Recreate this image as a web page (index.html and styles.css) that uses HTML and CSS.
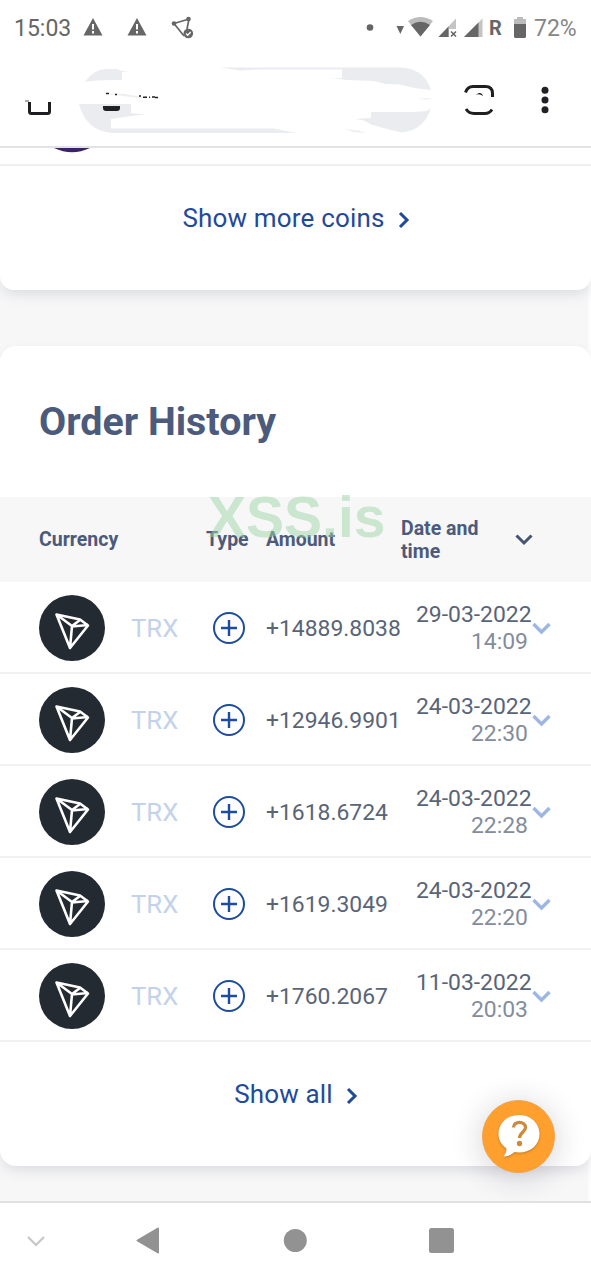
FILE: index.html
```html
<!DOCTYPE html>
<html lang="en">
<head>
<meta charset="utf-8">
<title>Order History</title>
<link rel="stylesheet" href="styles.css">
</head>
<body>
<div class="phone">
  <header class="status">
    <span class="clock">15:03</span>
    <svg class="warn" width="20" height="18" viewBox="0 0 20 18"><path d="M10 0 19.5 17.5H.5Z" fill="#666"/><path d="M10 6v5.500M10 13v2.400" stroke="#fff" stroke-width="2"/></svg>
    <svg class="warn second" width="20" height="18" viewBox="0 0 20 18"><path d="M10 0 19.5 17.5H.5Z" fill="#666"/><path d="M10 6v5.500M10 13v2.400" stroke="#fff" stroke-width="2"/></svg>
    <svg class="mesh" width="24" height="24" viewBox="0 0 24 24"><path d="M3 7.500 18 3M3 7.500 13 20M18 3 16 13" fill="none" stroke="#666" stroke-width="1.700"/><circle cx="3" cy="7.500" r="2.300" fill="#666"/><circle cx="17.500" cy="3" r="2.300" fill="#666"/><circle cx="17.300" cy="17.500" r="4.800" fill="#666"/><path d="m15 17.500 1.700 1.700 3-3.200" fill="none" stroke="#fff" stroke-width="1.300"/></svg>
    <svg class="signals" width="226" height="26" viewBox="365 15 226 26">
      <circle cx="370" cy="27.500" r="3.300" fill="#666"/>
      <path d="M396.500 26h7.500l-3.700 8Z" fill="#666"/>
      <path d="M408 21Q420.500 13 433 21L420.500 36.500Z" fill="#bcbcbc"/><path d="M411 25Q420.500 18.500 430 25L420.500 36.500Z" fill="#666"/>
      <path d="M438.500 37 456 18.500V29h-7v8Z" fill="#c4c4c4"/><path d="M438.500 37 448.500 26.500V37Z" fill="#666"/><path d="m451 31.500 5 5m0-5-5 5" stroke="#666" stroke-width="1.600"/>
      <path d="M464 37 482.500 18.500V37Z" fill="#c4c4c4"/><path d="M464 37 478.500 22.500V37Z" fill="#666"/>
      <path d="M517 17h6v2h3v6h-12v-6h3Z" fill="#bcbcbc"/><path d="M514 24h12v12.500q0 1.500-1.500 1.500h-9q-1.500 0-1.500-1.500Z" fill="#666"/>
    </svg>
    <b class="roaming">R</b>
    <span class="charge">72%</span>
  </header>

  <nav class="browser">
    <svg class="home" width="28" height="36" viewBox="25 80 28 36"><path d="M29.500 102v9.500q0 2 2 2h16q2 0 2-2V102" fill="none" stroke="#1f1f22" stroke-width="3"/><path d="M25 101h4" stroke="#555" stroke-width="1"/></svg>
    <svg class="address" width="357" height="82" viewBox="78 66 357 82">
      <path d="M85 81.500Q94 69 107 69h10l5 2 8 .5-8 .5v8Q100 79.500 85 81.500Z" fill="#ebecf0"/>
      <path d="M79 104h52v9l15 1.500-15 1.500-20 3v9.500h163l22 4.500H112Q86 131 79 104Z" fill="#ebecf0"/>
      <path d="M220 67.500h180Q424 68 431 90L414 88 400 84.500 385 84 374 81 347 80 331 78h11v-8.500H260L240 70.500Z" fill="#ebecf0"/>
      <path d="M355 119 371 118v-6h42l14-1 4-3q-7 22-29 24.500l-13-3-18-5-7-4ZM417 99l10-.8 6 .8-6 .6ZM344 129l16 2 6 2-12-1Z" fill="#ebecf0"/>
      <path d="M100 93 125 94l17 3v1.500Z" fill="#efeff3"/>
      <path d="M103 106h17v2q0 3-3 3h-11q-3 0-3-3Z" fill="#202126"/>
      <path d="M106 93.500h3m6 1h2M139 96h2m2 1.200h4m2 0h1m2-.2h3m0 .5h3" stroke="#222" stroke-width="1.500"/>
    </svg>
    <svg class="tabs" width="32" height="34" viewBox="464 83 32 34"><path d="M465.500 92.500q2-6 7.500-6h12.500q7 0 7 7V97M466 109q3 4.500 8 4.500h11q4.500 0 7-4" fill="none" stroke="#1f1f22" stroke-width="3"/><path d="M475.500 94.700 479 93q3-.5 4 3-3-2.500-7.500-1.300Z" fill="#222"/></svg>
    <svg class="dots" width="8" height="28" viewBox="0 0 8 28"><g fill="#202124"><circle cx="4" cy="4.300" r="3.500"/><circle cx="4" cy="14" r="3.500"/><circle cx="4" cy="23.700" r="3.500"/></g></svg>
  </nav>

  <main class="content">
    <section class="card coins">
      <div class="coin-row"><svg width="36" height="6" viewBox="0 0 36 6"><path d="M0 0h36Q18 8.500 0 0Z" fill="#3c2367"/></svg></div>
      <a class="more"><span>Show more coins</span><svg class="chev" width="12" height="18" viewBox="0 0 12 18"><path d="m2 2 7 7-7 7" fill="none" stroke="#1f4a9c" stroke-width="3"/></svg></a>
    </section>

    <section class="card orders">
      <h1>Order History</h1>
      <div class="row head">
        <span>Currency</span><span></span><span>Type</span><span>Amount</span><span>Date and<br>time</span>
        <svg class="sort" width="18" height="12" viewBox="0 0 18 12"><path d="m1.500 1.500 7.500 7.500 7.500-7.500" fill="none" stroke="#475474" stroke-width="3"/></svg>
        <span class="watermark">XSS.is</span>
      </div>
      <div class="row"><svg class="coin"><use href="#tron"/></svg><span class="ticker">TRX</span><svg class="plus"><use href="#plus"/></svg><span class="amount">+14889.8038</span><span class="when">29-03-2022<small>14:09</small></span><svg class="open"><use href="#down"/></svg></div>
      <div class="row"><svg class="coin"><use href="#tron"/></svg><span class="ticker">TRX</span><svg class="plus"><use href="#plus"/></svg><span class="amount">+12946.9901</span><span class="when">24-03-2022<small>22:30</small></span><svg class="open"><use href="#down"/></svg></div>
      <div class="row"><svg class="coin"><use href="#tron"/></svg><span class="ticker">TRX</span><svg class="plus"><use href="#plus"/></svg><span class="amount">+1618.6724</span><span class="when">24-03-2022<small>22:28</small></span><svg class="open"><use href="#down"/></svg></div>
      <div class="row"><svg class="coin"><use href="#tron"/></svg><span class="ticker">TRX</span><svg class="plus"><use href="#plus"/></svg><span class="amount">+1619.3049</span><span class="when">24-03-2022<small>22:20</small></span><svg class="open"><use href="#down"/></svg></div>
      <div class="row"><svg class="coin"><use href="#tron"/></svg><span class="ticker">TRX</span><svg class="plus"><use href="#plus"/></svg><span class="amount">+1760.2067</span><span class="when">11-03-2022<small>20:03</small></span><svg class="open"><use href="#down"/></svg></div>
      <a class="more all"><span>Show all</span><svg class="chev" width="12" height="18" viewBox="0 0 12 18"><path d="m2 2 7 7-7 7" fill="none" stroke="#1f4a9c" stroke-width="3"/></svg></a>
    </section>

    <div class="help">
      <svg width="44" height="46" viewBox="0 0 44 46"><path d="M22 2C10 2 1.500 10 1.500 21c0 6 3 11 8 14.500 0 3-1 5.500-3 8 5 0 8-2 11-4.500l4.500.5c12 0 20.500-8 20.500-18.500S34 2 22 2Z" fill="#fff"/><path d="M16.500 14.500c0-7 12-6.500 12 0 0 4.500-6 5-6 10.500" fill="none" stroke="#cc8b3c" stroke-width="3.300"/><circle cx="22.500" cy="30.500" r="2.700" fill="#cc8b3c"/></svg>
    </div>
  </main>

  <footer class="keys">
    <svg width="591" height="77" viewBox="0 1203 591 77"><path d="m28 1237 8 8 8-8" fill="none" stroke="#c6c6c6" stroke-width="2.200"/><path d="m137.500 1240.500 20.500-12v24Z" fill="#929292" stroke="#929292" stroke-width="2" stroke-linejoin="round"/><circle cx="295.300" cy="1240.500" r="11.500" fill="#929292"/><rect x="429" y="1228" width="25" height="25" rx="2.500" fill="#929292"/></svg>
  </footer>
</div>

<svg class="symbols" width="0" height="0">
  <symbol id="tron" viewBox="0 0 66 66"><circle cx="33" cy="33" r="33" fill="#242a32"/><path d="M17.500 19.500 41 24.500l8 6L31 53ZM17.500 19.500 33 31 31 53M33 31.500 49 30M33 31 41 25" fill="none" stroke="#fff" stroke-width="2.600" stroke-linejoin="round"/></symbol>
  <symbol id="plus" viewBox="0 0 32 32"><circle cx="16" cy="16" r="15" fill="none" stroke="#1d4b9e" stroke-width="2"/><path d="M8 16h16M16 8v16" stroke="#1d4b9e" stroke-width="2.400"/></symbol>
  <symbol id="down" viewBox="0 0 20 13"><path d="m1.500 2 8 8 8-8" fill="none" stroke="#9eb6e2" stroke-width="3.400"/></symbol>
</svg>
</body>
</html>
```
FILE: styles.css
```css
* { box-sizing: border-box; }
body { margin: 0; background: #fff; font-family: Roboto, "Liberation Sans", sans-serif; }
svg { display: block; flex: none; }
.phone { width: 591px; height: 1280px; display: flex; flex-direction: column; position: relative; overflow: hidden; }
.symbols { position: absolute; }

.status { height: 56px; display: flex; align-items: center; padding-left: 14px; color: #666; font-size: 23px; position: relative; }
.clock { width: 69px; }
.warn { margin-bottom: 3px; }
.second { margin-left: 24px; }
.mesh { margin-left: 24px; }
.signals { margin-left: 170px; }
.roaming { position: absolute; left: 489px; top: 16px; font-size: 20px; line-height: 24px; font-weight: 700; }
.charge { position: absolute; left: 534px; top: 15px; line-height: 27px; color: #858585; }

.browser { height: 92px; display: flex; align-items: flex-start; padding: 10px 0 0 25px; border-bottom: 2px solid #e3e3e5; }
.home { margin-top: 14px; }
.address { margin-left: 25px; }
.tabs { margin: 17px 0 0 29px; }
.dots { margin: 20px 0 0 45px; }

.content { height: 1053px; background: linear-gradient(90deg, #f7f7f8 588px, #fcfcfc 588px); overflow: hidden; position: relative; }
.card { background: #fff; border-radius: 0 0 14px 14px; box-shadow: 0 6px 14px -2px rgba(50, 55, 80, .14); }
.coins { height: 142px; }
.coin-row { height: 18px; padding-left: 54px; border-bottom: 2px solid #f0f0f1; }
.more { display: flex; align-items: center; justify-content: center; gap: 13px; color: #1f4a9c; font-size: 26px; letter-spacing: .17px; height: 104px; padding-left: 1px; }
.chev { margin-top: 3px; }
.orders { margin-top: 56px; height: 820px; border-radius: 16px; }
h1 { margin: 0; height: 151px; padding: 52px 39px 0; font-size: 39.400px; line-height: 47px; color: #4c5a7b; font-weight: 700; }

.row { display: grid; grid-template-columns: 92px 77px 58px 135px 131px 20px; padding: 2px 0 0 39px; height: 92px; align-items: center; border-bottom: 2px solid #f1f1f2; }
.head { height: 85px; padding-top: 0; background: #f7f7f8; border: 0; font-size: 19.500px; line-height: 23px; color: #4c5a7b; font-weight: 700; grid-template-columns: 92px 75px 60px 135px 114px 20px; position: relative; }
.watermark { position: absolute; left: 208px; top: -13px; font: 700 57px/66px "Liberation Sans", sans-serif; color: rgba(158, 213, 163, .5); }
.coin { width: 66px; height: 66px; }
.ticker { color: #c2d2ea; font-size: 25.700px; }
.plus { width: 32px; height: 32px; margin-left: 5px; }
.amount, .when { font-size: 22.900px; color: #596477; white-space: nowrap; }
.when { padding-left: 15px; line-height: 27px; }
.when small { display: block; font-size: 22.900px; color: #838c9b; width: 112px; text-align: right; }
.open { width: 20px; height: 13px; }
.all { height: 104px; }

.help { position: absolute; left: 482px; top: 952px; width: 73px; height: 73px; border-radius: 50%; background: #ffa02e; border: 1px solid #f0a34b; box-shadow: 0 4px 32px rgba(30, 30, 50, .2); display: flex; align-items: center; justify-content: center; }
.help svg { margin-top: -1px; filter: drop-shadow(0 1px 1px rgba(130, 80, 20, .5)); }
.keys { height: 79px; border-top: 2px solid #e1e1e2; background: #fff; }
```
